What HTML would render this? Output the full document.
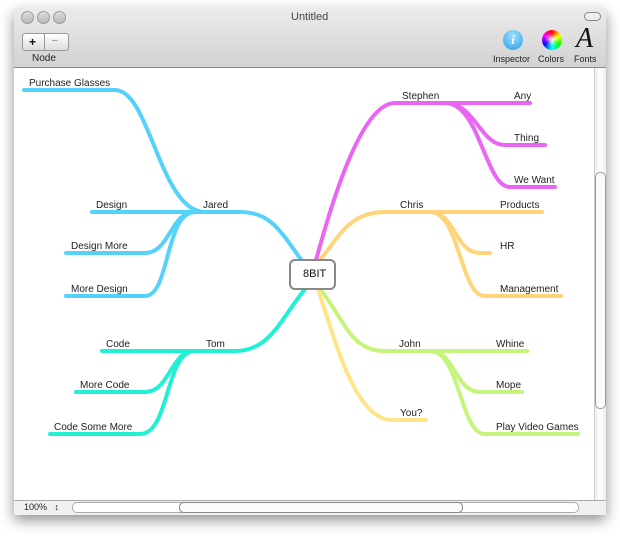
<!DOCTYPE html>
<html><head><style>
body{margin:0;width:620px;height:536px;background:#fff;font-family:"Liberation Sans",sans-serif;overflow:hidden;position:relative}
.win{position:absolute;left:14px;top:7px;width:592px;height:507px;box-shadow:0 6px 14px rgba(0,0,0,.45);border-radius:5px 5px 0 0;background:#fff}
.tb{position:absolute;left:0;top:0;width:592px;height:60px;background:linear-gradient(#ececec,#d2d2d2);border-bottom:1px solid #8a8a8a;border-radius:5px 5px 0 0}
.dot{position:absolute;top:4px;width:11px;height:11px;border-radius:50%;background:linear-gradient(#ddd,#bbb);border:1px solid #999}
.t{position:absolute;font-size:10px;color:#222}
svg{position:absolute;left:0;top:0}
</style></head><body>
<div class="win">
<div class="tb">
<div class="dot" style="left:7px"></div><div class="dot" style="left:23px"></div><div class="dot" style="left:39px"></div>
<div class="t" style="left:277px;top:4px;color:#444;font-size:11px">Untitled</div>
<div style="position:absolute;left:570px;top:5px;width:15px;height:7px;border:1px solid #888;border-radius:5px;background:#eee"></div>
<div style="position:absolute;left:8px;top:26px;width:45px;height:16px;border:1px solid #999;border-radius:3px;background:linear-gradient(#fff,#ddd)"></div>
<div style="position:absolute;left:30px;top:26px;width:1px;height:17px;background:#999"></div>
<div class="t" style="left:15px;top:28px;font-weight:bold;color:#111;font-size:12px">+</div>
<div class="t" style="left:38px;top:28px;color:#777">–</div>
<div class="t" style="left:18px;top:46px;font-size:10px">Node</div>
<div style="position:absolute;left:489px;top:23px;width:20px;height:20px;border-radius:50%;background:radial-gradient(circle at 50% 30%,#9de0ff,#2a9ee6);color:#fff;font:italic bold 13px 'Liberation Serif',serif;text-align:center;line-height:20px">i</div>
<div style="position:absolute;left:528px;top:23px;width:20px;height:20px;border-radius:50%;background:conic-gradient(red,yellow,lime,cyan,blue,magenta,red)"><div style="margin:6px;width:8px;height:8px;border-radius:50%;background:#fff;filter:blur(2px)"></div></div>
<div style="position:absolute;left:562px;top:16px;font:italic 28px 'Liberation Serif',serif;color:#111">A</div>
<div class="t" style="left:479px;top:47px;font-size:9px">Inspector</div>
<div class="t" style="left:524px;top:47px;font-size:9px">Colors</div>
<div class="t" style="left:560px;top:47px;font-size:9px">Fonts</div>
</div>
<div style="position:absolute;left:580px;top:61px;width:11px;height:432px;background:linear-gradient(90deg,#eee,#fff,#eee);border-left:1px solid #ccc"></div>
<div style="position:absolute;left:581px;top:165px;width:9px;height:235px;border:1px solid #999;border-radius:5px;background:#fafafa"></div>
<div style="position:absolute;left:0;top:493px;width:592px;height:14px;background:#f0f0f0;border-top:1px solid #aaa"></div>
<div class="t" style="left:10px;top:495px;font-size:9px">100%&nbsp;&nbsp;&nbsp;↕</div>
<div style="position:absolute;left:58px;top:495px;width:505px;height:9px;border:1px solid #aaa;border-radius:5px;background:#fff"></div>
<div style="position:absolute;left:165px;top:495px;width:282px;height:9px;border:1px solid #888;border-radius:5px;background:#fbfbfb"></div>
</div>
<svg width="620" height="536" fill="none" stroke-width="4" stroke-linecap="round">
<g stroke="#55d2fc">
<path d="M302 261 C280 230 270 212 240 212 L92 212"/>
<path d="M195 212 C170 212 170 253 145 253 L66 253"/>
<path d="M195 212 C165 212 170 296 145 296 L66 296"/>
<path d="M205 212 C160 212 150 90 115 90 L24 90"/>
</g>
<g stroke="#22f0d4">
<path d="M305 289 C280 320 270 351 235 351 L102 351"/>
<path d="M195 351 C170 351 170 392 145 392 L76 392"/>
<path d="M195 351 C165 351 170 434 140 434 L50 434"/>
</g>
<g stroke="#e866f2">
<path d="M316 260 C330 210 360 103 395 103 L530 103"/>
<path d="M445 103 C475 103 480 145 505 145 L545 145"/>
<path d="M445 103 C480 103 485 187 510 187 L555 187"/>
</g>
<g stroke="#ffd47a">
<path d="M320 260 C340 235 350 212 385 212 L542 212"/>
<path d="M430 212 C455 212 455 253 480 253 L490 253"/>
<path d="M430 212 C460 212 460 296 485 296 L561 296"/>
</g>
<g stroke="#c4f57a">
<path d="M320 289 C345 320 350 351 385 351 L527 351"/>
<path d="M430 351 C455 351 455 392 480 392 L522 392"/>
<path d="M430 351 C460 351 460 434 485 434 L578 434"/>
</g>
<path stroke="#ffe48a" d="M318 289 C335 340 355 420 392 420 L426 420"/>
<rect x="290" y="260" width="45" height="29" rx="5" fill="#fff" stroke="#888" stroke-width="2"/>
</svg>
<div class="t" style="left:303px;top:268px;color:#111;font-size:11px">8BIT</div>
<div class="t" style="left:29px;top:78px">Purchase Glasses</div>
<div class="t" style="left:203px;top:200px">Jared</div>
<div class="t" style="left:96px;top:200px">Design</div>
<div class="t" style="left:71px;top:241px">Design More</div>
<div class="t" style="left:71px;top:284px">More Design</div>
<div class="t" style="left:206px;top:339px">Tom</div>
<div class="t" style="left:106px;top:339px">Code</div>
<div class="t" style="left:80px;top:380px">More Code</div>
<div class="t" style="left:54px;top:422px">Code Some More</div>
<div class="t" style="left:402px;top:91px">Stephen</div>
<div class="t" style="left:514px;top:91px">Any</div>
<div class="t" style="left:514px;top:133px">Thing</div>
<div class="t" style="left:514px;top:175px">We Want</div>
<div class="t" style="left:400px;top:200px">Chris</div>
<div class="t" style="left:500px;top:200px">Products</div>
<div class="t" style="left:500px;top:241px">HR</div>
<div class="t" style="left:500px;top:284px">Management</div>
<div class="t" style="left:399px;top:339px">John</div>
<div class="t" style="left:496px;top:339px">Whine</div>
<div class="t" style="left:496px;top:380px">Mope</div>
<div class="t" style="left:496px;top:422px">Play Video Games</div>
<div class="t" style="left:400px;top:408px">You?</div>
</body></html>
